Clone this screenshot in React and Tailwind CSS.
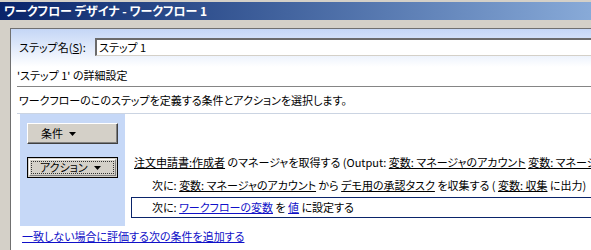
import React from "react";

function Tri() {
  return (
    <svg width="7" height="4" viewBox="0 0 7 4" className="shrink-0">
      <polygon points="0,0 7,0 3.5,4" fill="#000" />
    </svg>
  );
}

export default function App() {
  return (
    <div className="w-[591px] h-[250px] overflow-hidden bg-[#d4d0c8] text-[11px] leading-none text-black font-['Noto_Sans_CJK_JP',sans-serif] [font-feature-settings:'palt']">
      <div className="h-[2px] bg-[#d4d0c8]" />
      <div className="h-[18px] flex items-center pl-[4px] bg-linear-to-r from-[#0a246a] to-[#88aad8] text-white font-bold text-[12px] whitespace-nowrap">
        ワークフロー デザイナ - ワークフロー 1
      </div>
      <div className="h-[8px]" />
      <div className="flex h-[222px]">
        <div className="w-[10px] shrink-0" />
        <div className="flex-1 min-w-0 bg-white border-t border-l border-[#707070] flex flex-col">
          <div className="h-[38px] bg-linear-to-b from-[#c4d6f6] to-white pt-[9px] flex items-start">
            <span className="pl-[8px] w-[84px] shrink-0 h-[18px] flex items-center whitespace-nowrap">
              ステップ名(<u>S</u>):
            </span>
            <div className="flex-1 h-[18px] bg-white border-t-2 border-l-2 border-t-[#6b6b6b] border-l-[#6b6b6b] border-b border-b-[#d4d0c8] flex items-center pl-[2px] -mr-[10px] whitespace-nowrap">
              ステップ 1
            </div>
          </div>
          <div className="h-[16px] flex items-center pl-[6px] whitespace-nowrap">
            'ステップ 1' の詳細設定
          </div>
          <div className="h-[3px]" />
          <div className="ml-[6px] h-px bg-[#858585]" />
          <div className="h-[26px] flex items-center pl-[8px] whitespace-nowrap">
            ワークフローのこのステップを定義する条件とアクションを選択します。
          </div>
          <div className="ml-[6px] h-px bg-[#cbd4e2]" />
          <div className="flex h-[112px] pl-[9px]">
            <div className="w-[105px] shrink-0 bg-[#c6d8f7] pl-[7px] pt-[9px] flex flex-col gap-[13px]">
              <div className="w-[91px] h-[21px] bg-[#d4d0c8] border border-t-white border-l-white border-r-[#404040] border-b-[#404040] shadow-[inset_-1px_-1px_#808080] flex items-center gap-[6px] pl-[13px]">
                <span>条件</span>
                <Tri />
              </div>
              <div className="w-[91px] h-[21px] bg-[#d4d0c8] border border-black p-[1px]">
                <div className="h-full border border-t-white border-l-white border-r-[#808080] border-b-[#808080] p-[1px]">
                  <div className="h-full border border-dotted border-[#333] flex items-center gap-[6px] pl-[8px]">
                    <span>アクション</span>
                    <Tri />
                  </div>
                </div>
              </div>
            </div>
            <div className="flex-1 min-w-0 flex flex-col pt-[41px] whitespace-nowrap">
              <div className="h-[14px] flex items-center pl-[9px]">
                <span>
                  <u>注文申請書:作成者</u> のマネージャを取得する (Output: <u>変数: マネージャのアカウント</u> <u>変数: マネージャの名前</u>)
                </span>
              </div>
              <div className="h-[9px]" />
              <div className="h-[14px] flex items-center pl-[27px]">
                <span>
                  次に: <u>変数: マネージャのアカウント</u> から <u>デモ用の承認タスク</u> を収集する ( <u>変数: 収集</u> に出力)
                </span>
              </div>
              <div className="h-[5px]" />
              <div className="ml-[6px] -mr-[10px] h-[21px] border border-[#0a246a] flex items-center pl-[20px]">
                <span>
                  次に: <u className="text-[#1010c8]">ワークフローの変数</u> を <u className="text-[#1010c8]">値</u> に設定する
                </span>
              </div>
            </div>
          </div>
          <div className="h-[20px] flex items-center pl-[11px] whitespace-nowrap">
            <u className="text-[#1010c8]">一致しない場合に評価する次の条件を追加する</u>
          </div>
        </div>
      </div>
    </div>
  );
}
